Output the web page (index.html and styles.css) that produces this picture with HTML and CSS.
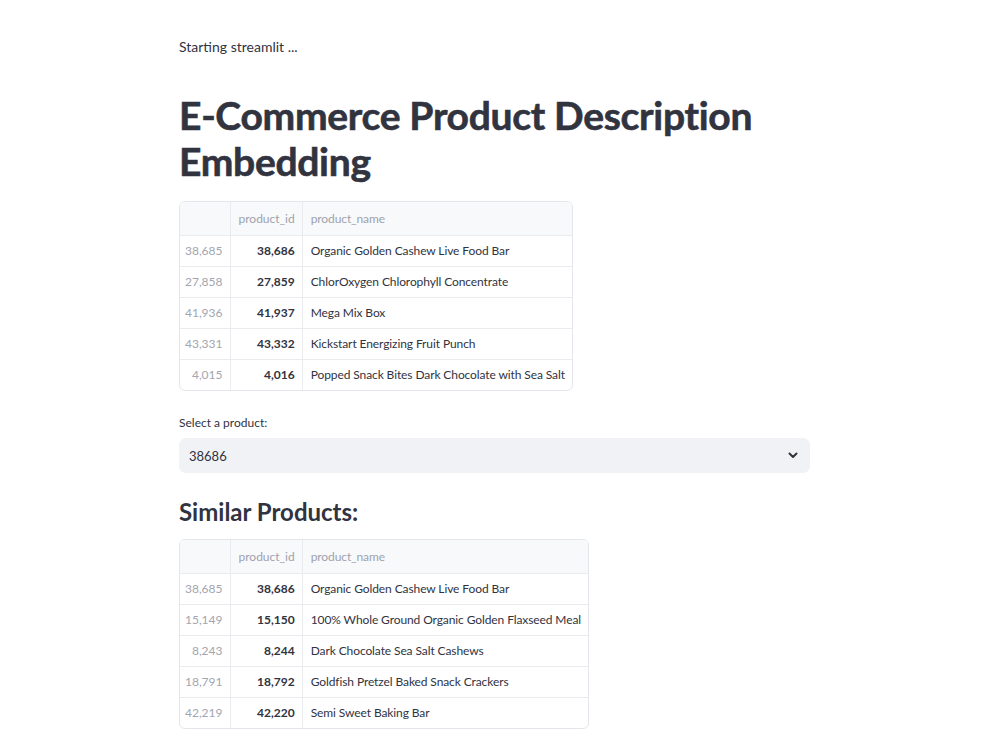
FILE: index.html
```html
<!DOCTYPE html>
<html>
  <head>
    <meta charset="utf-8" />
    <title>E-Commerce Product Description Embedding</title>
    <link rel="stylesheet" href="styles.css">
  </head>
  <body>
    <div class="main">
      <p class="status">Starting streamlit ...</p>

      <h1 class="title">E-Commerce Product Description Embedding</h1>

      <div class="frame">
        <table class="grid">
          <thead>
            <tr><th class="idx"></th><th class="num">product_id</th><th>product_name</th></tr>
          </thead>
          <tbody>
            <tr><td class="idx">38,685</td><td class="num">38,686</td><td>Organic Golden Cashew Live Food Bar</td></tr>
            <tr><td class="idx">27,858</td><td class="num">27,859</td><td>ChlorOxygen Chlorophyll Concentrate</td></tr>
            <tr><td class="idx">41,936</td><td class="num">41,937</td><td>Mega Mix Box</td></tr>
            <tr><td class="idx">43,331</td><td class="num">43,332</td><td>Kickstart Energizing Fruit Punch</td></tr>
            <tr><td class="idx">4,015</td><td class="num">4,016</td><td>Popped Snack Bites Dark Chocolate with Sea Salt</td></tr>
          </tbody>
        </table>
      </div>

      <label class="label">Select a product:</label>
      <div class="select">
        <span>38686</span>
        <svg class="chevron" width="10" height="7" viewBox="0 0 10 7">
          <polyline points="1.5,1.5 5,5 8.5,1.5" fill="none" stroke="#31333f" stroke-width="2" stroke-linecap="round" stroke-linejoin="round" />
        </svg>
      </div>

      <h3 class="subtitle">Similar Products:</h3>

      <div class="frame">
        <table class="grid">
          <thead>
            <tr><th class="idx"></th><th class="num">product_id</th><th>product_name</th></tr>
          </thead>
          <tbody>
            <tr><td class="idx">38,685</td><td class="num">38,686</td><td>Organic Golden Cashew Live Food Bar</td></tr>
            <tr><td class="idx">15,149</td><td class="num">15,150</td><td>100% Whole Ground Organic Golden Flaxseed Meal</td></tr>
            <tr><td class="idx">8,243</td><td class="num">8,244</td><td>Dark Chocolate Sea Salt Cashews</td></tr>
            <tr><td class="idx">18,791</td><td class="num">18,792</td><td>Goldfish Pretzel Baked Snack Crackers</td></tr>
            <tr><td class="idx">42,219</td><td class="num">42,220</td><td>Semi Sweet Baking Bar</td></tr>
          </tbody>
        </table>
      </div>
    </div>
  </body>
</html>
```

FILE: styles.css
```css
* {
  margin: 0;
  padding: 0;
  box-sizing: border-box;
}
body {
  background: #ffffff;
  color: #31333f;
  font-family: Lato, "Open Sans", sans-serif;
}
.main {
  width: 631px;
  margin-left: 179px;
  padding-top: 38px;
}
.status {
  font-size: 14px;
  line-height: 18px;
}
.title {
  margin-top: 36px;
  font-size: 39px;
  font-weight: 700;
  line-height: 46px;
  letter-spacing: -0.3px;
  -webkit-text-stroke: 0.6px #31333f; /* a bit heavier than plain bold */
}
/* dataframe */
.frame {
  display: inline-block;
  margin-top: 17px;
  border: 1px solid #e4e6eb;
  border-radius: 6px;
  overflow: hidden;
}
.subtitle + .frame {
  margin-top: 12px;
}
.grid {
  border-collapse: collapse;
  font-size: 12px;
}
.grid th,
.grid td {
  height: 31px;
  padding: 0 7px 0 8px;
  text-align: left;
  white-space: nowrap;
  border-right: 1px solid #e9ebef;
  border-bottom: 1px solid #e9ebef;
}
.grid th:last-child,
.grid td:last-child {
  padding-right: 7px;
  letter-spacing: -0.1px;
  border-right: none;
}
.grid tbody tr:last-child td {
  border-bottom: none;
}
.grid thead th {
  height: 33px;
  background: #f8f9fb;
  color: #9ea2ab;
  font-weight: 400;
}
.grid .idx {
  width: 50px;
  padding-left: 2px;
  text-align: right;
  color: #a2a6b0;
}
.grid .num {
  text-align: right;
}
.grid td.num {
  font-weight: 700;
}
.label {
  display: block;
  margin-top: 21px;
  font-size: 12px;
  line-height: 16px;
}
.select {
  display: flex;
  align-items: center;
  justify-content: space-between;
  height: 35px;
  margin-top: 7px;
  padding: 0 12px 0 10px;
  background: #f0f2f6;
  border-radius: 7px;
  font-size: 13px;
}
.subtitle {
  margin-top: 24px;
  font-size: 24px;
  font-weight: 700;
  line-height: 30px;
}
```
